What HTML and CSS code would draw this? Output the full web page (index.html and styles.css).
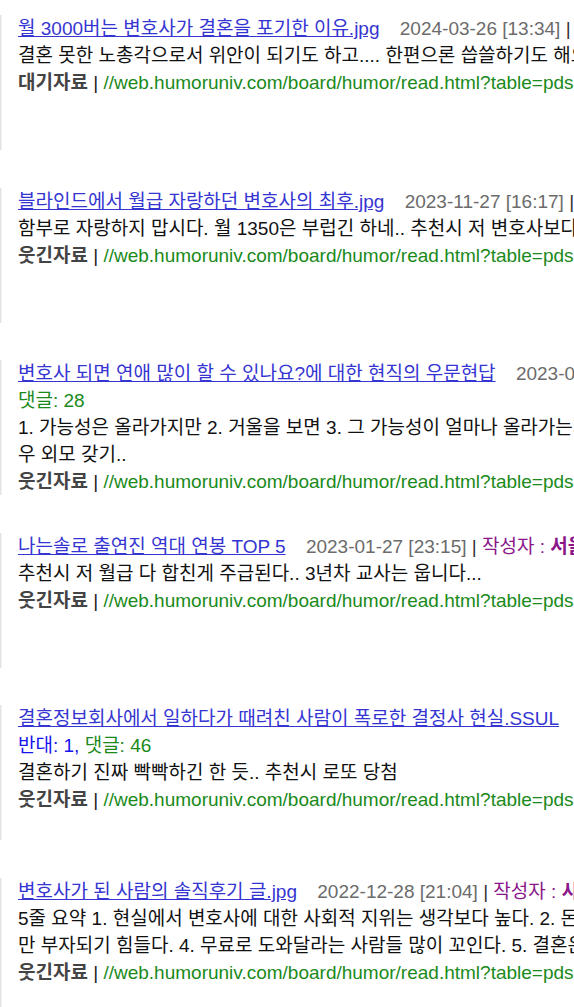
FILE: index.html
```html
<!DOCTYPE html>
<html lang="ko">
<head>
  <meta charset="UTF-8">
  <meta name="viewport" content="width=device-width, initial-scale=1.0">
  <title>검색결과</title>
  <link rel="stylesheet" href="styles.css">
</head>
<body>
  <div class="results">

    <div class="item">
      <div class="line head">
        <a class="title" href="#">월 3000버는 변호사가 결혼을 포기한 이유.jpg</a>
        <span class="date">2024-03-26 [13:34]</span> <span class="sep">|</span> <span class="writer">작성자 : <b>익명</b></span>
      </div>
      <div class="line snippet">결혼 못한 노총각으로서 위안이 되기도 하고.... 한편으론 씁쓸하기도 해요</div>
      <div class="line src"><b>대기자료</b> | <span class="url">//web.humoruniv.com/board/humor/read.html?table=pds&amp;number=1</span></div>
    </div>

    <div class="item">
      <div class="line head">
        <a class="title" href="#">블라인드에서 월급 자랑하던 변호사의 최후.jpg</a>
        <span class="date">2023-11-27 [16:17]</span> <span class="sep">|</span> <span class="writer">작성자 : <b>익명</b></span>
      </div>
      <div class="line snippet">함부로 자랑하지 맙시다. 월 1350은 부럽긴 하네.. 추천시 저 변호사보다 더 법니다</div>
      <div class="line src"><b>웃긴자료</b> | <span class="url">//web.humoruniv.com/board/humor/read.html?table=pds&amp;number=2</span></div>
    </div>

    <div class="item">
      <div class="line head">
        <a class="title" href="#">변호사 되면 연애 많이 할 수 있나요?에 대한 현직의 우문현답</a>
        <span class="date">2023-03-02 [10:21]</span> <span class="sep">|</span> <span class="writer">작성자 : <b>익명</b></span>
      </div>
      <div class="line meta"><span class="cmt">댓글: 28</span></div>
      <div class="line snippet">1. 가능성은 올라가지만 2. 거울을 보면 3. 그 가능성이 얼마나 올라가는지 알 수 있다 4. 최</div>
      <div class="line snippet">우 외모 갖기..</div>
      <div class="line src"><b>웃긴자료</b> | <span class="url">//web.humoruniv.com/board/humor/read.html?table=pds&amp;number=3</span></div>
    </div>

    <div class="item">
      <div class="line head">
        <a class="title" href="#">나는솔로 출연진 역대 연봉 TOP 5</a>
        <span class="date">2023-01-27 [23:15]</span> <span class="sep">|</span> <span class="writer">작성자 : <b>서울촌놈</b></span>
      </div>
      <div class="line snippet">추천시 저 월급 다 합친게 주급된다.. 3년차 교사는 웁니다...</div>
      <div class="line src"><b>웃긴자료</b> | <span class="url">//web.humoruniv.com/board/humor/read.html?table=pds&amp;number=4</span></div>
    </div>

    <div class="item">
      <div class="line head">
        <a class="title" href="#">결혼정보회사에서 일하다가 때려친 사람이 폭로한 결정사 현실.SSUL</a>
        <span class="date">2023-01-10 [09:48]</span> <span class="sep">|</span> <span class="writer">작성자 : <b>익명</b></span>
      </div>
      <div class="line meta"><span class="oppose">반대: 1</span>, <span class="cmt">댓글: 46</span></div>
      <div class="line snippet">결혼하기 진짜 빡빡하긴 한 듯.. 추천시 로또 당첨</div>
      <div class="line src"><b>웃긴자료</b> | <span class="url">//web.humoruniv.com/board/humor/read.html?table=pds&amp;number=5</span></div>
    </div>

    <div class="item">
      <div class="line head">
        <a class="title" href="#">변호사가 된 사람의 솔직후기 글.jpg</a>
        <span class="date">2022-12-28 [21:04]</span> <span class="sep">|</span> <span class="writer">작성자 : <b>사랑꾼</b></span>
      </div>
      <div class="line snippet">5줄 요약 1. 현실에서 변호사에 대한 사회적 지위는 생각보다 높다. 2. 돈은 잘 벌지</div>
      <div class="line snippet">만 부자되기 힘들다. 4. 무료로 도와달라는 사람들 많이 꼬인다. 5. 결혼은 어렵다</div>
      <div class="line src"><b>웃긴자료</b> | <span class="url">//web.humoruniv.com/board/humor/read.html?table=pds&amp;number=6</span></div>
    </div>

  </div>
</body>
</html>
```

FILE: styles.css
```css
body {
  margin: 0;
  padding: 0;
  background: #fff;
  color: #111;
  font-family: "Liberation Sans", "Noto Sans CJK KR", sans-serif;
  font-size: 19px;
  overflow: hidden;
}

.results {
  width: 900px;
  padding-top: 15px;
}

.item {
  height: 135px;
  margin-bottom: 37.6px;
  padding-left: 17px;
  border-left: 1px solid #e2e2e2;
  box-shadow: inset 1px 0 0 #f3f3f3;
}

.line {
  line-height: 27px;
  white-space: nowrap;
}

.title {
  color: #3535d2;
  text-decoration: underline;
  margin-right: 15px;
}

.date {
  color: #6b6b6b;
}

.sep {
  color: #333;
}

.writer {
  color: #8a168a;
}

.meta {
  color: #1515ee;
}

.meta .oppose {
  color: #1515ee;
}

.meta .cmt {
  color: #1a8a1a;
}

.snippet {
  color: #111;
}

.src {
  color: #222;
}

.src b {
  color: #444;
}

.url {
  color: #1a8a1a;
}
```
